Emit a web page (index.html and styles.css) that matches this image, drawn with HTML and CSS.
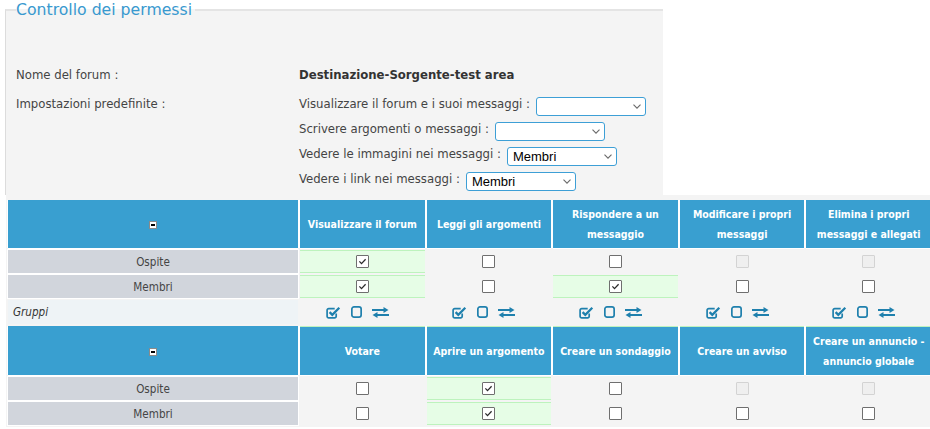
FILE: index.html
```html
<!DOCTYPE html>
<html lang="it">
<head>
<meta charset="utf-8">
<title>Controllo dei permessi</title>
<link rel="stylesheet" href="styles.css">
</head>
<body>
<svg class="defs" aria-hidden="true">
  <defs>
    <symbol id="tick" viewBox="0 0 11 11"><path d="M2.4 5.4 4.5 7.6 8.6 3.2" fill="none" stroke="#2a2a2a" stroke-width="1.25"/></symbol>
    <symbol id="i-check" viewBox="0 0 15 13"><path d="M10.2 7.6v2.6a1.6 1.6 0 0 1-1.6 1.6H2.7a1.6 1.6 0 0 1-1.6-1.6V4.3a1.6 1.6 0 0 1 1.6-1.6h6" fill="none" stroke="currentColor" stroke-width="1.7"/><path d="M3.6 6.1l2.7 2.7 7-7" fill="none" stroke="currentColor" stroke-width="2.3"/></symbol>
    <symbol id="i-square" viewBox="0 0 11 12"><rect x="0.85" y="0.85" width="9.3" height="10.3" rx="2.2" fill="none" stroke="currentColor" stroke-width="1.7"/></symbol>
    <symbol id="i-swap" viewBox="0 0 17 11"><path d="M0 3h12.5" stroke="currentColor" stroke-width="2"/><path d="M11.5 0 16.5 3 11.5 6z" fill="currentColor"/><path d="M17 8H4.5" stroke="currentColor" stroke-width="2"/><path d="M5.5 5 0.5 8 5.5 11z" fill="currentColor"/></symbol>
    <symbol id="chev" viewBox="0 0 8 5"><path d="M0.5 0.6 4 4.2 7.5 0.6" fill="none" stroke="#6a6a6a" stroke-width="1.1"/></symbol>
  </defs>
</svg>
<div class="page">
  <fieldset class="perm">
    <legend>Controllo dei permessi</legend>
    <div class="info">
      <div class="lbl">Nome del forum :</div>
      <div class="val"><b>Destinazione-Sorgente-test area</b></div>
      <div class="lbl">Impostazioni predefinite :</div>
      <div class="val settings">
        <div class="set"><span>Visualizzare il forum e i suoi messaggi :</span><span class="sel"><select><option selected></option><option>Ospite</option><option>Membri</option></select><svg class="chev"><use href="#chev"/></svg></span></div>
        <div class="set"><span>Scrivere argomenti o messaggi :</span><span class="sel"><select><option selected></option><option>Ospite</option><option>Membri</option></select><svg class="chev"><use href="#chev"/></svg></span></div>
        <div class="set"><span>Vedere le immagini nei messaggi :</span><span class="sel"><select><option></option><option>Ospite</option><option selected>Membri</option></select><svg class="chev"><use href="#chev"/></svg></span></div>
        <div class="set"><span>Vedere i link nei messaggi :</span><span class="sel"><select><option></option><option>Ospite</option><option selected>Membri</option></select><svg class="chev"><use href="#chev"/></svg></span></div>
      </div>
    </div>
  </fieldset>

  <div class="grid-wrap">
    <table class="perms">
      <colgroup><col class="c-name"><col class="c-data"><col class="c-data"><col class="c-data"><col class="c-data"><col class="c-data"></colgroup>
      <tr class="head">
        <th><span class="tog"></span></th>
        <th>Visualizzare il forum</th>
        <th>Leggi gli argomenti</th>
        <th>Rispondere a un messaggio</th>
        <th>Modificare i propri messaggi</th>
        <th>Elimina i propri messaggi e allegati</th>
      </tr>
      <tr>
        <td class="name">Ospite</td>
        <td class="on"><span class="cb"><svg><use href="#tick"/></svg></span></td>
        <td><span class="cb"></span></td>
        <td><span class="cb"></span></td>
        <td><span class="cb dis"></span></td>
        <td><span class="cb dis"></span></td>
      </tr>
      <tr>
        <td class="name">Membri</td>
        <td class="on"><span class="cb"><svg><use href="#tick"/></svg></span></td>
        <td><span class="cb"></span></td>
        <td class="on"><span class="cb"><svg><use href="#tick"/></svg></span></td>
        <td><span class="cb"></span></td>
        <td><span class="cb"></span></td>
      </tr>
      <tr class="grp">
        <td class="gname">Gruppi</td>
        <td><span class="ico"><svg class="ic-check"><use href="#i-check"/></svg><svg class="ic-square"><use href="#i-square"/></svg><svg class="ic-swap"><use href="#i-swap"/></svg></span></td>
        <td><span class="ico"><svg class="ic-check"><use href="#i-check"/></svg><svg class="ic-square"><use href="#i-square"/></svg><svg class="ic-swap"><use href="#i-swap"/></svg></span></td>
        <td><span class="ico"><svg class="ic-check"><use href="#i-check"/></svg><svg class="ic-square"><use href="#i-square"/></svg><svg class="ic-swap"><use href="#i-swap"/></svg></span></td>
        <td><span class="ico"><svg class="ic-check"><use href="#i-check"/></svg><svg class="ic-square"><use href="#i-square"/></svg><svg class="ic-swap"><use href="#i-swap"/></svg></span></td>
        <td><span class="ico"><svg class="ic-check"><use href="#i-check"/></svg><svg class="ic-square"><use href="#i-square"/></svg><svg class="ic-swap"><use href="#i-swap"/></svg></span></td>
      </tr>
      <tr class="head head2">
        <th><span class="tog"></span></th>
        <th class="d">Votare</th>
        <th class="d">Aprire un argomento</th>
        <th class="d">Creare un sondaggio</th>
        <th class="d">Creare un avviso</th>
        <th class="d">Creare un annuncio - annuncio globale</th>
      </tr>
      <tr>
        <td class="name">Ospite</td>
        <td><span class="cb"></span></td>
        <td class="on"><span class="cb"><svg><use href="#tick"/></svg></span></td>
        <td><span class="cb"></span></td>
        <td><span class="cb dis"></span></td>
        <td><span class="cb dis"></span></td>
      </tr>
      <tr>
        <td class="name">Membri</td>
        <td><span class="cb"></span></td>
        <td class="on"><span class="cb"><svg><use href="#tick"/></svg></span></td>
        <td><span class="cb"></span></td>
        <td><span class="cb"></span></td>
        <td><span class="cb"></span></td>
      </tr>
    </table>
  </div>
</div>
</body>
</html>
```

FILE: styles.css
```css
html, body {
  margin: 0;
  padding: 0;
  background: #fff;
}
body {
  font-family: "DejaVu Sans Condensed", "DejaVu Sans", sans-serif;
  color: #444;
  overflow: hidden;
}
.defs {
  position: absolute;
  width: 0;
  height: 0;
  overflow: hidden;
}
.page {
  width: 930px;
  overflow: hidden;
}

/* ---------- fieldset ---------- */
.perm {
  margin: 0 0 0 5px;
  width: 658px;
  min-width: 0;
  box-sizing: border-box;
  padding: 45px 0 1px 10px;
  border: 1px solid #dcdcdc;
  border-top: 2px solid #e4e4e4;
  border-right: 0;
  border-bottom: 0;
  background: #f4f4f4;
}
.perm legend {
  padding: 0 3px 0 0;
  font-family: "DejaVu Sans", sans-serif;
  font-size: 15.7px;
  line-height: 20px;
  color: #3899cf;
}
.info {
  display: grid;
  grid-template-columns: 283px 1fr;
  row-gap: 9px;
  font-size: 13px;
  line-height: 20px;
}
.val b {
  color: #333;
}
.settings {
  display: flex;
  flex-direction: column;
}
.set {
  display: flex;
  align-items: flex-start;
  height: 25px;
  white-space: nowrap;
}
.sel {
  position: relative;
  display: inline-block;
  margin: 3px 0 0 6px;
}
.sel select {
  -webkit-appearance: none;
  appearance: none;
  display: block;
  width: 110px;
  height: 19px;
  box-sizing: border-box;
  margin: 0;
  padding: 0 16px 0 5px;
  border: 1px solid #3d9fd6;
  border-radius: 3px;
  background: #fff;
  font: 13px "Liberation Sans", Arial, sans-serif;
  color: #000;
}
.chev {
  position: absolute;
  right: 5px;
  top: 7px;
  width: 8px;
  height: 5px;
  pointer-events: none;
}

/* ---------- table ---------- */
.grid-wrap {
  margin-left: 6px;
  width: 924px;
  overflow: hidden;
  background: #f4f4f4;
  padding-top: 3px;
}
.perms {
  border-collapse: separate;
  border-spacing: 2px;
  table-layout: fixed;
  width: 927px;
  font-size: 11.6px;
  color: #444;
}
.c-name {
  width: 290px;
}
.perms th {
  height: 48px;
  box-sizing: border-box;
  padding: 0 5px;
  background: #399fd0;
  color: #fff;
  font-weight: bold;
  font-size: 10.5px;
  line-height: 20px;
  vertical-align: middle;
  text-align: center;
  box-shadow: 1px 0 0 #fff, -1px 0 0 #fff, 0 1px 0 #fff;
}
.perms tr.head2 th {
  height: 49px;
}
.perms tr.head2 th.d {
  border-top: 1px solid #bff2bf;
}
.perms td {
  height: 23px;
  box-sizing: border-box;
  padding: 0;
  text-align: center;
  vertical-align: middle;
  border-top: 1px solid transparent;
  border-bottom: 1px solid transparent;
}
.perms td.name {
  background: #d1d5dc;
  box-shadow: 0 0 0 1px #fff;
}
.perms td.on {
  background: #e6fde6;
  border-top-color: #bdf3bd;
  border-bottom-color: #bdf3bd;
}
.perms tr.grp td {
  height: 24px;
}
.perms td.gname {
  background: #eef3f6;
  text-align: left;
  padding-left: 5px;
  font-style: italic;
  color: #333;
}
.tog {
  display: inline-block;
  vertical-align: middle;
  width: 6px;
  height: 6px;
  border: 1px solid #8a8a8a;
  background: #fff linear-gradient(#000, #000) center / 4px 2px no-repeat;
}
.cb {
  display: block;
  margin: 0 auto;
  width: 13px;
  height: 13px;
  box-sizing: border-box;
  border: 1px solid #6f6f6f;
  border-radius: 1px;
  background: #fff;
}
.cb svg {
  display: block;
  width: 11px;
  height: 11px;
}
.cb.dis {
  background: #efefef;
  border-color: #d3d3d3;
}
.ico {
  display: flex;
  justify-content: center;
  align-items: center;
  gap: 10px;
  padding-right: 10px;
  color: #1f80ad;
}
.ic-check { width: 15px; height: 13px; }
.ic-square { width: 11px; height: 12px; }
.ic-swap { width: 17px; height: 11px; }
```
